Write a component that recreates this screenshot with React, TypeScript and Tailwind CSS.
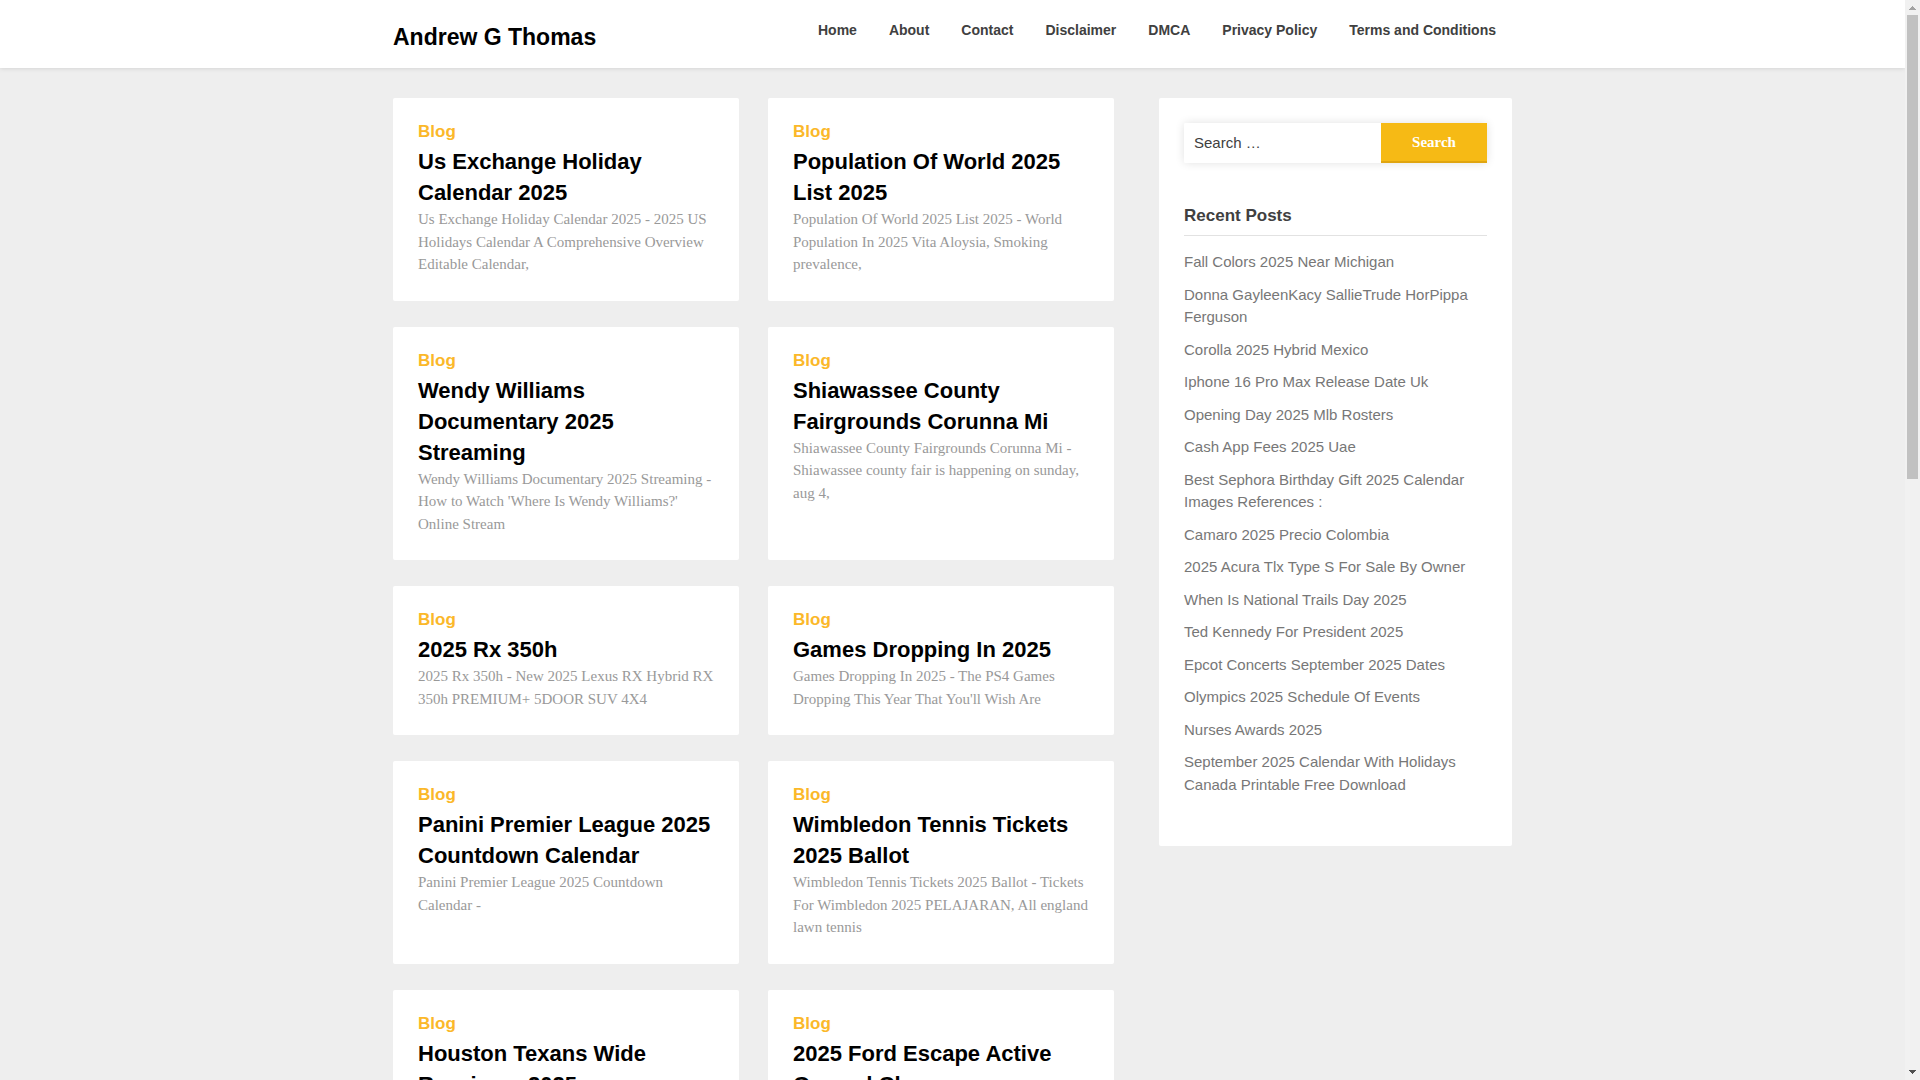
const navItems = ['Home', 'About', 'Contact', 'Disclaimer', 'DMCA', 'Privacy Policy', 'Terms and Conditions']

const posts = [
  {
    title: 'Us Exchange Holiday Calendar 2025',
    excerpt: 'Us Exchange Holiday Calendar 2025 - 2025 US Holidays Calendar A Comprehensive Overview Editable Calendar,',
  },
  {
    title: 'Population Of World 2025 List 2025',
    excerpt: 'Population Of World 2025 List 2025 - World Population In 2025 Vita Aloysia, Smoking prevalence,',
  },
  {
    title: 'Wendy Williams Documentary 2025 Streaming',
    excerpt: "Wendy Williams Documentary 2025 Streaming - How to Watch 'Where Is Wendy Williams?' Online Stream",
  },
  {
    title: 'Shiawassee County Fairgrounds Corunna Mi',
    excerpt: 'Shiawassee County Fairgrounds Corunna Mi - Shiawassee county fair is happening on sunday, aug 4,',
  },
  {
    title: '2025 Rx 350h',
    excerpt: '2025 Rx 350h - New 2025 Lexus RX Hybrid RX 350h PREMIUM+ 5DOOR SUV 4X4',
  },
  {
    title: 'Games Dropping In 2025',
    excerpt: "Games Dropping In 2025 - The PS4 Games Dropping This Year That You'll Wish Are",
  },
  {
    title: 'Panini Premier League 2025 Countdown Calendar',
    excerpt: 'Panini Premier League 2025 Countdown Calendar -',
  },
  {
    title: 'Wimbledon Tennis Tickets 2025 Ballot',
    excerpt: 'Wimbledon Tennis Tickets 2025 Ballot - Tickets For Wimbledon 2025 PELAJARAN, All england lawn tennis',
  },
  {
    title: 'Houston Texans Wide Receivers 2025',
    excerpt: '',
  },
  {
    title: '2025 Ford Escape Active Ground Clearance',
    excerpt: '',
  },
]

const recentPosts = [
  'Fall Colors 2025 Near Michigan',
  'Donna GayleenKacy SallieTrude HorPippa Ferguson',
  'Corolla 2025 Hybrid Mexico',
  'Iphone 16 Pro Max Release Date Uk',
  'Opening Day 2025 Mlb Rosters',
  'Cash App Fees 2025 Uae',
  'Best Sephora Birthday Gift 2025 Calendar Images References :',
  'Camaro 2025 Precio Colombia',
  '2025 Acura Tlx Type S For Sale By Owner',
  'When Is National Trails Day 2025',
  'Ted Kennedy For President 2025',
  'Epcot Concerts September 2025 Dates',
  'Olympics 2025 Schedule Of Events',
  'Nurses Awards 2025',
  'September 2025 Calendar With Holidays Canada Printable Free Download',
]

function Header() {
  return (
    <header className="bg-white shadow-[0_0_5px_rgba(0,0,0,0.15)]">
      <div className="mx-auto flex h-[68px] max-w-[1119px] items-start justify-between">
        <a href="#" className="pt-[22px] text-[23px] font-bold leading-[30px] text-black">
          Andrew G Thomas
        </a>
        <nav className="flex gap-8 px-4 pt-5">
          {navItems.map((item) => (
            <a key={item} href="#" className="text-[14px] font-bold leading-5 text-[#404040]">
              {item}
            </a>
          ))}
        </nav>
      </div>
    </header>
  )
}

function PostCard({ title, excerpt }: { title: string; excerpt: string }) {
  return (
    <article className="rounded-[2px] bg-white p-[25px]">
      <a href="#" className="mb-[6px] block text-[17px] font-bold leading-[17px] text-[#fbb829]">
        Blog
      </a>
      <h2 className="text-[22px] font-bold leading-[31px] text-black">
        <a href="#">{title}</a>
      </h2>
      {excerpt && (
        <p className="font-['Liberation_Serif',serif] text-[15px] leading-normal text-[#999]">{excerpt}</p>
      )}
    </article>
  )
}

function Sidebar() {
  return (
    <aside className="rounded-[2px] bg-white px-[25px] pt-[25px] pb-[40px]">
      <form className="flex h-10 rounded-[2px] shadow-[0_0_10px_rgba(0,0,0,0.12)]" onSubmit={(e) => e.preventDefault()}>
        <label htmlFor="search" className="sr-only">
          Search for:
        </label>
        <input
          id="search"
          type="search"
          placeholder="Search …"
          className="min-w-0 flex-1 rounded-l-[2px] bg-white px-[10px] text-[15px] text-[#404040] outline-none placeholder:text-[#404040]"
        />
        <button
          type="submit"
          className="w-[106px] border-b-2 border-[#e0a510] bg-[#f6ba15] font-['Liberation_Serif',serif] text-[15px] font-bold text-white"
        >
          Search
        </button>
      </form>

      <h2 className="mt-[41px] border-b border-[#e2e2e2] pb-[7px] text-[17px] font-bold leading-6 text-[#404040]">
        Recent Posts
      </h2>
      <ul className="mt-[15px]">
        {recentPosts.map((post) => (
          <li key={post} className="mb-[10px] text-[15px] leading-normal text-[#777]">
            <a href="#">{post}</a>
          </li>
        ))}
      </ul>
    </aside>
  )
}

function ScrollTrack() {
  return (
    <div className="flex w-[15px] shrink-0 flex-col items-center bg-[#f1f1f1]" aria-hidden="true">
      <svg viewBox="0 0 15 15" className="size-[15px] shrink-0" shapeRendering="crispEdges">
        <path d="M7 6h1v1h1v1h1v1h1v1H4V9h1V8h1V7h1z" fill="#a3a3a3" />
      </svg>
      <div className="min-h-0 flex-1">
        <div className="h-[43vh] w-[11px] bg-[#c1c1c1]" />
      </div>
      <svg viewBox="0 0 15 15" className="size-[15px] shrink-0" shapeRendering="crispEdges">
        <path d="M4 5h7v1h-1v1H9v1H8v1H7V8H6V7H5V6H4z" fill="#505050" />
      </svg>
    </div>
  )
}

export default function App() {
  return (
    <div className="flex h-screen overflow-hidden bg-[#eee] font-['Liberation_Sans',sans-serif]">
      <div className="min-w-0 flex-1">
        <Header />
        <div className="mx-auto mt-[30px] grid max-w-[1119px] grid-cols-[1fr_353px] items-start gap-[45px]">
          <main className="grid grid-cols-2 gap-x-[29px] gap-y-[26px]">
            {posts.map((post) => (
              <PostCard key={post.title} {...post} />
            ))}
          </main>
          <Sidebar />
        </div>
      </div>
      <ScrollTrack />
    </div>
  )
}
